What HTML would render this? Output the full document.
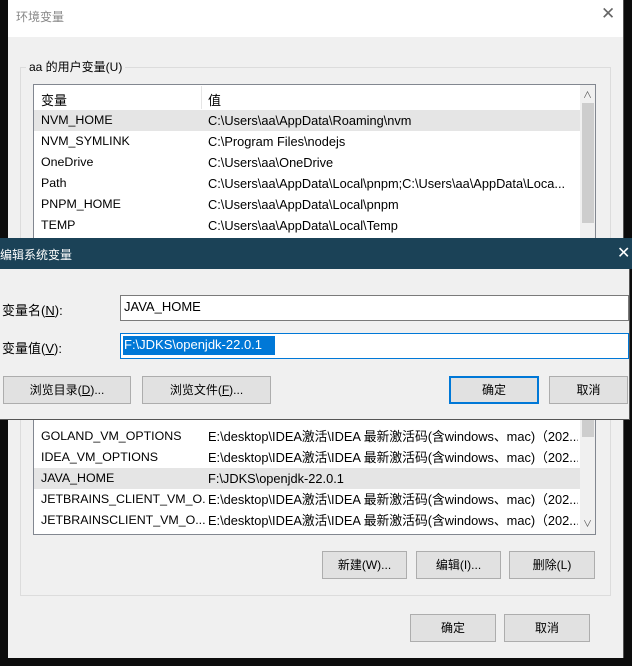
<!DOCTYPE html>
<html><head><meta charset="utf-8"><style>
*{box-sizing:border-box;margin:0;padding:0}
body{width:632px;height:666px;background:#0c0c0c;position:relative;overflow:hidden;font-family:"Liberation Sans","Noto Sans CJK SC",sans-serif;font-size:13px;color:#000}
.a{position:absolute}
.btn{position:absolute;background:#e1e1e1;border:1px solid #adadad;text-align:center;font-size:12px}
.row{position:absolute;left:0;width:546px;height:21px;line-height:21px}
.row span{position:absolute;white-space:nowrap;overflow:hidden}
.row .k{left:7px;width:164px;font-size:12.4px}.row .v{left:174px;width:370px;font-size:12.8px}
</style></head><body>
<div class="a" style="left:8px;top:0;width:616px;height:658px;background:#f0f0f0;border-right:1px solid #555"></div>
<div class="a" style="left:8px;top:0;width:615px;height:37px;background:#fff"></div>
<div class="a" style="left:16px;top:8px;color:#888;font-size:12px">环境变量</div>
<div class="a" style="left:601px;top:4px;color:#666;font-size:17px;font-weight:300">✕</div>
<div class="a" style="left:20px;top:67px;width:591px;height:529px;border:1px solid #dcdcdc"></div>
<div class="a" style="left:26px;top:58px;background:#f0f0f0;padding:0 3px;font-size:12px">aa 的用户变量(U)</div>
<div class="a" style="left:33px;top:84px;width:563px;height:451px;background:#fff;border:1px solid #828790"></div>
<div class="a" style="left:34px;top:85px;width:546px;height:24px;background:#fff"></div>
<div class="a" style="left:41px;top:90px">变量</div>
<div class="a" style="left:201px;top:86px;width:1px;height:23px;background:#e5e5e5"></div>
<div class="a" style="left:208px;top:90px">值</div>
<div class="a" style="left:580px;top:85px;width:15px;height:449px;background:#f0f0f0"></div>
<div class="a" style="left:582px;top:103px;width:12px;height:120px;background:#cdcdcd"></div>
<div class="a" style="left:582px;top:412px;width:12px;height:25px;background:#cdcdcd"></div>
<div class="a" style="left:583px;top:88px;font-size:9px;color:#555">∧</div>
<div class="a" style="left:583px;top:517px;font-size:9px;color:#555">∨</div>
<div class="a" style="left:34px;top:110px">
<div class="row" style="top:0;background:#e5e5e5"><span class="k">NVM_HOME</span><span class="v">C:\Users\aa\AppData\Roaming\nvm</span></div>
<div class="row" style="top:21px"><span class="k">NVM_SYMLINK</span><span class="v">C:\Program Files\nodejs</span></div>
<div class="row" style="top:42px"><span class="k">OneDrive</span><span class="v">C:\Users\aa\OneDrive</span></div>
<div class="row" style="top:63px"><span class="k">Path</span><span class="v">C:\Users\aa\AppData\Local\pnpm;C:\Users\aa\AppData\Loca...</span></div>
<div class="row" style="top:84px"><span class="k">PNPM_HOME</span><span class="v">C:\Users\aa\AppData\Local\pnpm</span></div>
<div class="row" style="top:105px"><span class="k">TEMP</span><span class="v">C:\Users\aa\AppData\Local\Temp</span></div>
<div class="row" style="top:316px"><span class="k">GOLAND_VM_OPTIONS</span><span class="v">E:\desktop\IDEA激活\IDEA 最新激活码(含windows、mac)（202...</span></div>
<div class="row" style="top:337px"><span class="k">IDEA_VM_OPTIONS</span><span class="v">E:\desktop\IDEA激活\IDEA 最新激活码(含windows、mac)（202...</span></div>
<div class="row" style="top:358px;background:#e5e5e5"><span class="k">JAVA_HOME</span><span class="v">F:\JDKS\openjdk-22.0.1</span></div>
<div class="row" style="top:379px"><span class="k">JETBRAINS_CLIENT_VM_O...</span><span class="v">E:\desktop\IDEA激活\IDEA 最新激活码(含windows、mac)（202...</span></div>
<div class="row" style="top:400px"><span class="k">JETBRAINSCLIENT_VM_O...</span><span class="v">E:\desktop\IDEA激活\IDEA 最新激活码(含windows、mac)（202...</span></div>
</div>
<div class="btn" style="left:322px;top:551px;width:85px;height:28px;line-height:26px">新建(W)...</div>
<div class="btn" style="left:416px;top:551px;width:85px;height:28px;line-height:26px">编辑(I)...</div>
<div class="btn" style="left:509px;top:551px;width:86px;height:28px;line-height:26px">删除(L)</div>
<div class="btn" style="left:410px;top:614px;width:86px;height:28px;line-height:26px">确定</div>
<div class="btn" style="left:504px;top:614px;width:86px;height:28px;line-height:26px">取消</div>

<div class="a" style="left:0;top:238px;width:630px;height:182px;background:#f0f0f0;border-bottom:1px solid #555;border-right:1px solid #555"></div>
<div class="a" style="left:0;top:238px;width:632px;height:31px;background:#1b4257"></div>
<div class="a" style="left:0;top:246px;color:#fff;font-size:12px">编辑系统变量</div>
<div class="a" style="left:617px;top:243px;color:#fff;font-size:16px;font-weight:300">✕</div>
<div class="a" style="left:2px;top:300px">变量名(<u>N</u>):</div>
<div class="a" style="left:120px;top:295px;width:509px;height:26px;background:#fff;border:1px solid #7a7a7a"></div>
<div class="a" style="left:124px;top:299px">JAVA_HOME</div>
<div class="a" style="left:2px;top:338px">变量值(<u>V</u>):</div>
<div class="a" style="left:120px;top:333px;width:509px;height:26px;background:#fff;border:1px solid #0078d7"></div>
<div class="a" style="left:123px;top:336px;width:152px;height:19px;background:#0078d7"></div>
<div class="a" style="left:124px;top:337px;color:#fff">F:\JDKS\openjdk-22.0.1</div>
<div class="btn" style="left:3px;top:376px;width:128px;height:28px;line-height:26px">浏览目录(<u>D</u>)...</div>
<div class="btn" style="left:142px;top:376px;width:129px;height:28px;line-height:26px">浏览文件(<u>F</u>)...</div>
<div class="btn" style="left:449px;top:376px;width:90px;height:28px;line-height:24px;border:2px solid #0078d7">确定</div>
<div class="btn" style="left:549px;top:376px;width:79px;height:28px;line-height:26px">取消</div>
</body></html>
